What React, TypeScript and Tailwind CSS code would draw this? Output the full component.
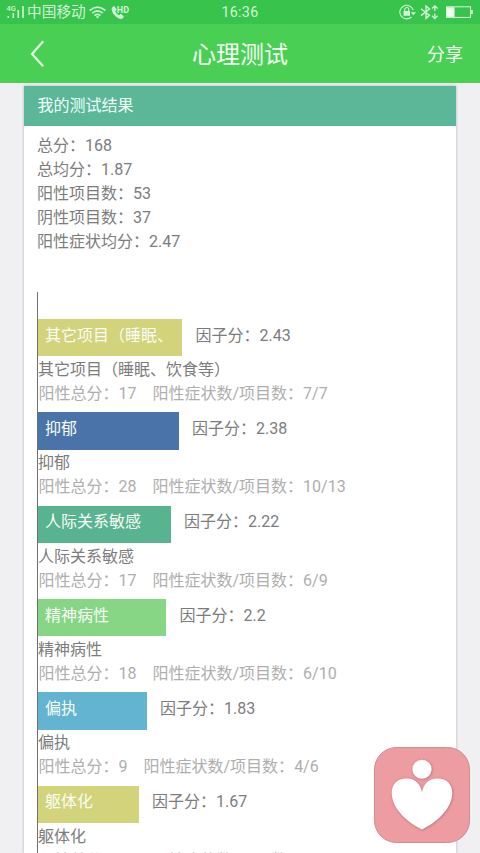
type Factor = {
  name: string;
  label: string;
  bar: string;
  score: string;
  total: string;
  ratio: string;
};

const factors: Factor[] = [
  { name: "其它项目（睡眠、饮食等）", label: "其它项目（睡眠、", bar: "w-[144px] bg-[#d3d37b]", score: "2.43", total: "17", ratio: "7/7" },
  { name: "抑郁", label: "抑郁", bar: "w-[140.5px] bg-[#4a74a9]", score: "2.38", total: "28", ratio: "10/13" },
  { name: "人际关系敏感", label: "人际关系敏感", bar: "w-[132.5px] bg-[#58b391]", score: "2.22", total: "17", ratio: "6/9" },
  { name: "精神病性", label: "精神病性", bar: "w-[128px] bg-[#86d686]", score: "2.2", total: "18", ratio: "6/10" },
  { name: "偏执", label: "偏执", bar: "w-[108.5px] bg-[#62b4d1]", score: "1.83", total: "9", ratio: "4/6" },
  { name: "躯体化", label: "躯体化", bar: "w-[100.5px] bg-[#d3d37b]", score: "1.67", total: "20", ratio: "7/12" },
];

const summary = ["总分：168", "总均分：1.87", "阳性项目数：53", "阴性项目数：37", "阳性症状均分：2.47"];

function SignalIcon() {
  return (
    <svg className="ml-[6px] h-[16px] w-[19px]" viewBox="0 0 19 16" fill="#d2f5d6">
      <text x="0.5" y="7" fontSize="7.5" fontWeight="500" fontFamily="Roboto, sans-serif">4G</text>
      <rect x="1.5" y="12" width="1.6" height="2" />
      <rect x="6.5" y="9" width="1.6" height="5" />
      <rect x="11.5" y="6" width="1.6" height="8" />
      <rect x="16.2" y="2" width="1.6" height="12" />
    </svg>
  );
}

function WifiIcon() {
  return (
    <svg className="ml-[3px] h-[13px] w-[17px]" viewBox="0 0 17 13" fill="none" stroke="#c9f5cf" strokeWidth="1.7">
      <path d="M.7 4.5Q8.5-2.2 16.3 4.5M3.2 7.1Q8.5 2.5 13.8 7.1M5.6 9.6Q8.5 7.1 11.4 9.6" />
      <path d="M6.8 10.7Q8.5 9.3 10.2 10.7L8.5 12.5Z" fill="#c9f5cf" stroke="none" />
    </svg>
  );
}

function CallIcon() {
  return (
    <svg className="ml-[5px] h-[15px] w-[20px]" viewBox="0 0 20 15" fill="#d2f5d6">
      <path d="M1 2.4 3.2 1 5.8 4.8 4.2 6.5Q5.6 9.1 8 10.2L9.6 8.7 13 11.2 11.7 13.5Q9 14.8 5.8 12.3Q1.5 9.2.6 4.3Z" />
      <text x="5.8" y="7.7" fontSize="9" fontWeight="700" fontFamily="Roboto, sans-serif">HD</text>
    </svg>
  );
}

function StatusIcons() {
  return (
    <svg className="mr-[5px] h-[18px] w-[76px]" viewBox="0 0 76 18" fill="none" stroke="#d2f5d6">
      <path d="M14.2 7.2A6.8 6.8 0 1 0 12.4 14" strokeWidth="1.1" />
      <path d="M11.8 9.2H17L14.4 12.2Z" fill="#d2f5d6" stroke="none" />
      <rect x="4.6" y="8" width="6.4" height="4.8" fill="#d2f5d6" stroke="none" />
      <path d="M5.8 8V6.5A2 2 0 0 1 9.8 6.5V8" strokeWidth="1.1" />
      <path d="M22 5.8 30.5 12.4 27 15.4V3L30.5 5.9 22 12.6" strokeWidth="1.4" />
      <path d="M35.8 3V8M35.8 10.5V15.5M33 5.5 35.8 2.8 38.6 5.5M33 12.8 35.8 15.5 38.6 12.8" strokeWidth="1.3" />
      <rect x="47.5" y="3.8" width="24" height="10.6" strokeWidth="1" />
      <rect x="48" y="4.3" width="7.5" height="9.6" fill="#effff0" stroke="none" />
      <rect x="72" y="7" width="1.8" height="4.2" fill="#d2f5d6" stroke="none" />
    </svg>
  );
}

function FactorRow({ factor }: { factor: Factor }) {
  return (
    <div className="h-[93.33px] whitespace-nowrap">
      <div className="flex h-[37.33px] text-[#7c7c7c]">
        <div className={`h-full shrink-0 pt-[4.6px] pl-[7px] leading-[24px] text-[#f8fdf5] ${factor.bar}`}>{factor.label}</div>
        <div className="pt-[4.6px] pl-[13.5px] leading-[24px]">因子分：{factor.score}</div>
      </div>
      <div className="h-[24px] pt-[1.7px] leading-[24px] text-[#7c7c7c]">{factor.name}</div>
      <div className="flex h-[24px] gap-[16px] pt-[1.7px] pl-[0.5px] leading-[24px] text-[#aeaeae]">
        <span>阳性总分：{factor.total}</span>
        <span>阳性症状数/项目数：{factor.ratio}</span>
      </div>
    </div>
  );
}

export default function App() {
  return (
    <div className="relative flex h-[853px] w-[480px] flex-col overflow-hidden bg-[#f0f0f2] font-[Roboto,'Noto_Sans_CJK_SC',sans-serif] text-[16px] text-[#7c7c7c]">
      <div className="grid h-[24px] shrink-0 grid-cols-[1fr_auto_1fr] items-center bg-[#37c34c] text-[#d2f5d6]">
        <div className="flex items-center">
          <SignalIcon />
          <span className="ml-[2px] text-[14.7px] leading-[24px]">中国移动</span>
          <WifiIcon />
          <CallIcon />
        </div>
        <span className="pt-px text-[14.3px] leading-[23px] tracking-[0.3px]">16:36</span>
        <div className="flex justify-end">
          <StatusIcons />
        </div>
      </div>
      <header className="grid h-[59px] shrink-0 grid-cols-[1fr_auto_1fr] items-center bg-[#4acf55] text-[#f0fff0]">
        <svg className="ml-[30px] h-[28px] w-[15px]" viewBox="0 0 15 28" fill="none" stroke="#e4fde5" strokeWidth="2.2">
          <path d="M13.2 1.3 2 14 13.2 26.2" />
        </svg>
        <h1 className="pt-[2px] text-[24px] leading-[36px]">心理测试</h1>
        <span className="mr-[17px] pt-[2px] text-right text-[18px] leading-[28px]">分享</span>
      </header>
      <main className="mx-[24px] mt-[3px] min-h-0 flex-1 overflow-hidden bg-white shadow-[0_0_3px_rgba(0,0,0,0.25)]">
        <h2 className="h-[40px] bg-[#5bb798] pl-[13.5px] text-[16px] leading-[40px] text-[#effff8]">我的测试结果</h2>
        <div className="pt-[8px] pl-[13px]">
          {summary.map((line) => (
            <p key={line} className="h-[24px] leading-[24px]">{line}</p>
          ))}
        </div>
        <section className="mt-[38px] ml-[13px] border-l border-[#6f6f6f] pt-[27px]">
          {factors.map((factor) => (
            <FactorRow key={factor.name} factor={factor} />
          ))}
        </section>
      </main>
      <svg className="absolute top-[747px] left-[374px] h-[96px] w-[96px]" viewBox="0 0 96 96">
        <defs>
          <filter id="soft" x="-20%" y="-20%" width="140%" height="140%">
            <feDropShadow dx="0.5" dy="0.5" stdDeviation="1.2" floodColor="#804850" floodOpacity="0.65" />
          </filter>
        </defs>
        <rect x="0.5" y="0.5" width="95" height="95" rx="22" fill="#ed9ca1" stroke="#d08c90" />
        <g fill="white" filter="url(#soft)">
          <circle cx="48" cy="22.3" r="9.5" />
          <path d="M48 46C47 37 41 31.5 33 31.5C23 31.5 17.8 37.5 17.8 46C17.8 60 31 74 48 82.5C65 74 78.2 60 78.2 46C78.2 37.5 73 31.5 63 31.5C55 31.5 49 37 48 46Z" />
        </g>
      </svg>
    </div>
  );
}
